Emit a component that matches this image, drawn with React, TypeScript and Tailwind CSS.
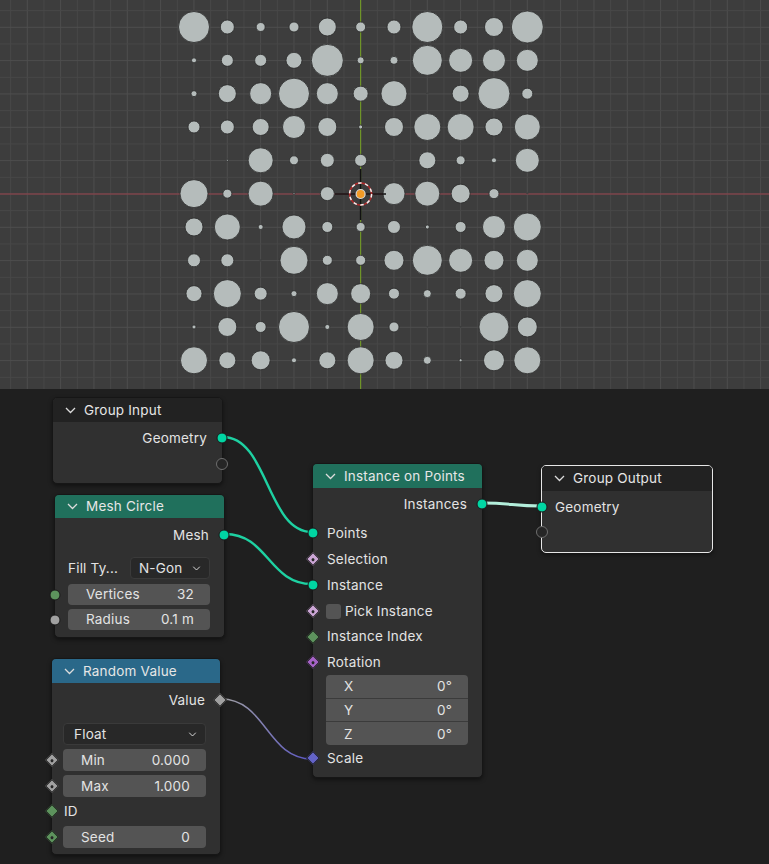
import React from 'react';

// diameters of the instanced circles, 11 x 11 grid
const SIZES: number[][] = [
  [31, 14, 9, 10, 18, 10, 14, 31, 14, 19, 32],
  [5, 12, 12, 16, 32, 7, 8, 30, 24, 23, 22],
  [6, 18, 22, 31, 22, 15, 26, 1, 17, 32, 11],
  [12, 14, 17, 23, 19, 4, 19, 27, 27, 18, 26],
  [1, 2, 25, 9, 14, 12, 1, 17, 9, 5, 24],
  [28, 9, 25, 2, 14, 0, 22, 25, 19, 10, 1],
  [18, 26, 5, 24, 11, 9, 13, 4, 11, 23, 28],
  [13, 13, 1, 28, 10, 10, 20, 30, 24, 20, 22],
  [16, 28, 13, 6, 22, 20, 11, 8, 11, 18, 28],
  [4, 19, 11, 31, 5, 27, 10, 1, 1, 30, 20],
  [27, 17, 19, 5, 17, 27, 18, 8, 3, 21, 27],
];

function Viewport() {
  const step = 16.667;
  const lines = Array.from({ length: 48 }, (_, i) => 10.6 + step * i);
  return (
    <div className="h-[389px] w-full bg-[#3d3d3d] overflow-hidden">
      <svg width="769" height="389" viewBox="0 0 769 389">
        {lines.map((v, i) => (
          <line key={`v${i}`} x1={v} y1={0} x2={v} y2={389} stroke={i % 2 ? '#4e4e4e' : '#484848'} strokeWidth={1} />
        ))}
        {lines.map((v, i) => (
          <line key={`h${i}`} x1={0} y1={v} x2={769} y2={v} stroke={i % 2 ? '#4e4e4e' : '#484848'} strokeWidth={1} />
        ))}
        <line x1={0} y1={194} x2={769} y2={194} stroke="#96404a" strokeWidth={1.2} />
        <line x1={360.6} y1={0} x2={360.6} y2={389} stroke="#6f9428" strokeWidth={1.2} />
        {SIZES.map((row, r) =>
          row.map((d, c) =>
            d > 0 ? (
              <circle
                key={`${r}-${c}`}
                cx={194 + 33.33 * c}
                cy={27 + 33.33 * r}
                r={d / 2}
                fill="#b5bcbb"
                stroke="#2a2a2a"
                strokeWidth={0.8}
              />
            ) : null,
          ),
        )}
        {/* 3d cursor + origin */}
        <line x1={335} y1={194} x2={386} y2={194} stroke="#111" strokeWidth={1.5} />
        <line x1={360.6} y1={169} x2={360.6} y2={220} stroke="#111" strokeWidth={1.5} />
        <circle cx={360.6} cy={194} r={11} fill="none" stroke="#b02a2a" strokeWidth={1.5} />
        <circle cx={360.6} cy={194} r={11} fill="none" stroke="#f2f2f2" strokeWidth={1.5} strokeDasharray="3.5 3.5" />
        <circle cx={360.6} cy={194} r={4.5} fill="#f29a26" stroke="#d9d9d9" strokeWidth={1.2} />
      </svg>
    </div>
  );
}

function Chevron({ className = '' }: { className?: string }) {
  return (
    <svg width="11" height="7" viewBox="0 0 11 7" className={className}>
      <polyline points="1,1 5.5,5.5 10,1" fill="none" stroke="#dcdcdc" strokeWidth="1.3" />
    </svg>
  );
}

function Circle({ side, cls }: { side: 'l' | 'r'; cls: string }) {
  return (
    <div
      className={`absolute top-1/2 -translate-y-1/2 w-[11px] h-[11px] rounded-full border border-[#1a1a1a] ${cls} ${
        side === 'l' ? 'left-0 -translate-x-1/2' : 'right-0 translate-x-1/2'
      }`}
    />
  );
}

function Hollow({ side }: { side: 'l' | 'r' }) {
  return (
    <div
      className={`absolute top-1/2 -translate-y-1/2 w-[12px] h-[12px] rounded-full border-[1.5px] border-[#6e6e6e] bg-[#262626] ${
        side === 'l' ? 'left-0 -translate-x-1/2' : 'right-0 translate-x-1/2'
      }`}
    />
  );
}

function Diamond({ side, cls, dot = false }: { side: 'l' | 'r'; cls: string; dot?: boolean }) {
  return (
    <div
      className={`absolute top-1/2 -translate-y-1/2 w-[14px] h-[14px] flex items-center justify-center ${
        side === 'l' ? 'left-0 -translate-x-1/2' : 'right-0 translate-x-1/2'
      }`}
    >
      <div className={`w-[10px] h-[10px] rotate-45 border border-[#1a1a1a] flex items-center justify-center ${cls}`}>
        {dot && <div className="w-[3px] h-[3px] rounded-full bg-[#262626]" />}
      </div>
    </div>
  );
}

function Field({ label, value, className = '' }: { label: string; value: string; className?: string }) {
  return (
    <div className={`flex flex-1 items-center justify-between rounded-[4px] bg-[#545454] pl-[18px] pr-4 ${className}`}>
      <span>{label}</span>
      <span>{value}</span>
    </div>
  );
}

function Node({
  title,
  head,
  pos,
  selected = false,
  children,
}: {
  title: string;
  head: string;
  pos: string;
  selected?: boolean;
  children: React.ReactNode;
}) {
  return (
    <div
      className={`absolute rounded-[5px] bg-[#303030] text-[13.5px] tracking-[0.2px] text-[#e3e3e3] shadow-[0_2px_4px_rgba(0,0,0,0.45)] ${
        selected ? 'border border-[#e6e6e6]' : 'border border-[#161616]'
      } ${pos}`}
    >
      <div className={`flex items-center gap-[8px] rounded-t-[4px] pl-3 ${head}`}>
        <Chevron />
        <span className="text-[#e6e6e6]">{title}</span>
      </div>
      {children}
    </div>
  );
}

function NodeEditor() {
  return (
    <div className="relative h-[475px] w-full bg-[#1f1f1f] overflow-hidden">
      <svg className="absolute inset-0" width="769" height="475" viewBox="0 0 769 475">
        <defs>
          <linearGradient id="rv" x1="221" y1="0" x2="312" y2="0" gradientUnits="userSpaceOnUse">
            <stop offset="0" stopColor="#a3a3a3" />
            <stop offset="1" stopColor="#5a55c4" />
          </linearGradient>
        </defs>
        <path d="M223 48 C 268 48, 267 143, 312 143" fill="none" stroke="#1ed1a2" strokeWidth={2.4} />
        <path d="M225 145 C 268 145, 269 195, 312 195" fill="none" stroke="#1ed1a2" strokeWidth={2.4} />
        <path d="M483 114 C 510 114, 514 117, 541 117" fill="none" stroke="#b3eedb" strokeWidth={3} />
        <path d="M221 310 C 266 310, 267 370, 312 370" fill="none" stroke="url(#rv)" strokeWidth={1.5} />
      </svg>

      {/* Group Input */}
      <Node title="Group Input" head="h-6 bg-[#222222]" pos="left-[52px] top-[8px] w-[171px]">
        <div className="relative mt-1 flex h-6 items-center justify-end pr-[15px]">
          <span>Geometry</span>
          <Circle side="r" cls="bg-[#00d6a3]" />
        </div>
        <div className="relative h-7">
          <Hollow side="r" />
        </div>
        <div className="h-[5px]" />
      </Node>

      {/* Mesh Circle */}
      <Node title="Mesh Circle" head="h-[23px] bg-[#20705c]" pos="left-[54px] top-[105px] w-[171px]">
        <div className="relative mt-[5px] flex h-6 items-center justify-end pr-[15px]">
          <span>Mesh</span>
          <Circle side="r" cls="bg-[#00d6a3]" />
        </div>
        <div className="mt-[10px] flex h-[22px] items-center pl-[13px] pr-[14px]">
          <span>Fill Ty...</span>
          <div className="ml-auto flex h-full w-[80px] items-center justify-between rounded-[4px] border border-[#3a3a3a] bg-[#282828] pl-2 pr-[7px]">
            <span>N-Gon</span>
            <Chevron className="scale-75" />
          </div>
        </div>
        <div className="relative mt-[5px] flex h-[21px] pl-[13px] pr-[14px]">
          <Circle side="l" cls="bg-[#5d935d]" />
          <Field label="Vertices" value="32" />
        </div>
        <div className="relative mt-1 flex h-[21px] pl-[13px] pr-[14px]">
          <Circle side="l" cls="bg-[#a1a1a1]" />
          <Field label="Radius" value="0.1 m" />
        </div>
        <div className="h-[7px]" />
      </Node>

      {/* Random Value */}
      <Node title="Random Value" head="h-6 bg-[#2a6889]" pos="left-[51px] top-[269px] w-[170px]">
        <div className="relative mt-[5px] flex h-6 items-center justify-end pr-[15px]">
          <span>Value</span>
          <Diamond side="r" cls="bg-[#a1a1a1]" />
        </div>
        <div className="mt-[11px] flex h-[22px] pl-[11px] pr-[14px]">
          <div className="flex flex-1 items-center justify-between rounded-[4px] border border-[#3a3a3a] bg-[#282828] pl-[10px] pr-[7px]">
            <span>Float</span>
            <Chevron className="scale-75" />
          </div>
        </div>
        <div className="relative mt-1 flex h-[22px] pl-[11px] pr-[14px]">
          <Diamond side="l" cls="bg-[#a1a1a1]" dot />
          <Field label="Min" value="0.000" />
        </div>
        <div className="relative mt-1 flex h-[22px] pl-[11px] pr-[14px]">
          <Diamond side="l" cls="bg-[#a1a1a1]" dot />
          <Field label="Max" value="1.000" />
        </div>
        <div className="relative mt-[2px] flex h-6 items-center pl-3">
          <Diamond side="l" cls="bg-[#5d935d]" />
          <span>ID</span>
        </div>
        <div className="relative mt-[3px] flex h-[22px] pl-[11px] pr-[14px]">
          <Diamond side="l" cls="bg-[#5d935d]" dot />
          <Field label="Seed" value="0" />
        </div>
        <div className="h-[6px]" />
      </Node>

      {/* Instance on Points */}
      <Node title="Instance on Points" head="h-6 bg-[#20705c]" pos="left-[312px] top-[74px] w-[171px]">
        <div className="relative mt-1 flex h-6 items-center justify-end pr-[15px]">
          <span>Instances</span>
          <Circle side="r" cls="bg-[#00d6a3]" />
        </div>
        <div className="relative mt-1 flex h-[26px] items-center pl-[14px]">
          <Circle side="l" cls="bg-[#00d6a3]" />
          <span>Points</span>
        </div>
        <div className="relative flex h-[26px] items-center pl-[14px]">
          <Diamond side="l" cls="bg-[#cca6d6]" dot />
          <span>Selection</span>
        </div>
        <div className="relative flex h-[26px] items-center pl-[14px]">
          <Circle side="l" cls="bg-[#00d6a3]" />
          <span>Instance</span>
        </div>
        <div className="relative flex h-[26px] items-center pl-[13px]">
          <Diamond side="l" cls="bg-[#cca6d6]" dot />
          <div className="h-[15px] w-[15px] rounded-[3px] bg-[#545454]" />
          <span className="ml-1">Pick Instance</span>
        </div>
        <div className="relative flex h-[25px] items-center pl-[14px]">
          <Diamond side="l" cls="bg-[#5d935d]" />
          <span>Instance Index</span>
        </div>
        <div className="relative flex h-[26px] items-center pl-[14px]">
          <Diamond side="l" cls="bg-[#a663c7]" dot />
          <span>Rotation</span>
        </div>
        <div className="pl-[13px] pr-[14px]">
          <div className="flex h-[70px] flex-col overflow-hidden rounded-[4px] bg-[#545454]">
            {['X', 'Y', 'Z'].map((a, i) => (
              <div
                key={a}
                className={`flex flex-1 items-center justify-between pl-[18px] pr-4 ${i > 0 ? 'border-t border-[#3b3b3b]' : ''}`}
              >
                <span>{a}</span>
                <span>0°</span>
              </div>
            ))}
          </div>
        </div>
        <div className="relative flex h-[26px] items-center pl-[14px]">
          <Diamond side="l" cls="bg-[#6363c7]" />
          <span>Scale</span>
        </div>
        <div className="h-[6px]" />
      </Node>

      {/* Group Output */}
      <Node title="Group Output" head="h-[25px] bg-[#222222]" pos="left-[541px] top-[76px] w-[172px]" selected>
        <div className="relative mt-1 flex h-6 items-center pl-[13px]">
          <Circle side="l" cls="bg-[#00d6a3]" />
          <span>Geometry</span>
        </div>
        <div className="relative h-[26px]">
          <Hollow side="l" />
        </div>
        <div className="h-[7px]" />
      </Node>
    </div>
  );
}

export default function App() {
  return (
    <div className="w-[769px] h-[864px] overflow-hidden bg-[#1f1f1f] font-['Inter','Noto_Sans',sans-serif]">
      <Viewport />
      <NodeEditor />
    </div>
  );
}
